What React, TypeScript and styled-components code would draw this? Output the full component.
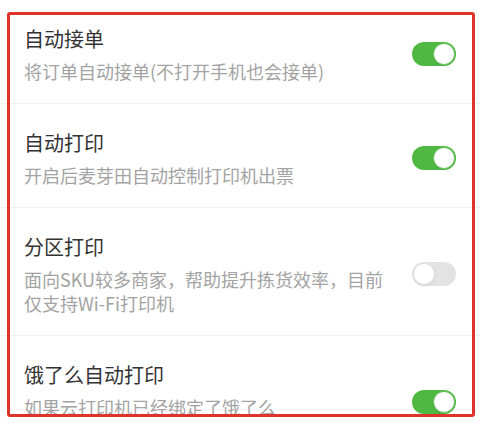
import React from "react";
import styled, { createGlobalStyle } from "styled-components";

const Global = createGlobalStyle`
  html, body { margin: 0; padding: 0; background: #ffffff; }
  body { font-family: "Noto Sans CJK SC", "Noto Sans", sans-serif; overflow: hidden; }
`;

const Screen = styled.div`
  position: relative;
  width: 480px;
  height: 426px;
  background: #ffffff;
`;

const Crop = styled.div`
  height: 414px;
  overflow: hidden;
`;

const List = styled.div`
  display: flex;
  flex-direction: column;
  background: #ffffff;
`;

const Row = styled.div`
  display: flex;
  align-items: center;
  gap: 20px;
  padding: 25px 24px 20px 24px;
  border-bottom: 1px solid #f1f1f1;
`;

const TextCol = styled.div`
  flex: 1;
  min-width: 0;
  display: flex;
  flex-direction: column;
  gap: 6px;
`;

const Title = styled.div`
  font-size: 20px;
  line-height: 28px;
  color: #333333;
`;

const Desc = styled.div`
  font-size: 18px;
  line-height: 24px;
  color: #a3a3a3;
`;

const Track = styled.div<{ $on: boolean }>`
  flex: none;
  width: 44px;
  height: 24px;
  border-radius: 12px;
  box-sizing: border-box;
  background: ${(p) => (p.$on ? "#4fb843" : "#e3e3e3")};
  display: flex;
  justify-content: ${(p) => (p.$on ? "flex-end" : "flex-start")};
  align-items: center;
  padding: 1px;
`;

const Knob = styled.div<{ $on: boolean }>`
  width: 22px;
  height: 22px;
  border-radius: 50%;
  background: #ffffff;
  box-sizing: border-box;
  border: 1px solid ${(p) => (p.$on ? "#6cc262" : "#e0e0e0")};
  box-shadow: 0 1px 2px rgba(0, 0, 0, 0.08);
`;

const Frame = styled.div`
  position: absolute;
  left: 7px;
  top: 12px;
  width: 468px;
  height: 405px;
  box-sizing: border-box;
  border: 3px solid #e0332c;
  border-radius: 3px;
  pointer-events: none;
`;

const Toggle = ({ on }: { on: boolean }) => (
  <Track $on={on}>
    <Knob $on={on} />
  </Track>
);

const items = [
  { title: "自动接单", desc: ["将订单自动接单(不打开手机也会接单)"], on: true },
  { title: "自动打印", desc: ["开启后麦芽田自动控制打印机出票"], on: true },
  { title: "分区打印", desc: ["面向SKU较多商家，帮助提升拣货效率，目前仅支持Wi-Fi打印机"], on: false },
  { title: "饿了么自动打印", desc: ["如果云打印机已经绑定了饿了么", "订单将自动打印"], on: true },
];

export default function App() {
  return (
    <>
      <Global />
      <Screen>
        <Crop>
          <List>
            {items.map((it) => (
              <Row key={it.title}>
                <TextCol>
                  <Title>{it.title}</Title>
                  <Desc>
                    {it.desc.map((d, i) => (
                      <div key={i}>{d}</div>
                    ))}
                  </Desc>
                </TextCol>
                <Toggle on={it.on} />
              </Row>
            ))}
          </List>
        </Crop>
        <Frame />
      </Screen>
    </>
  );
}
